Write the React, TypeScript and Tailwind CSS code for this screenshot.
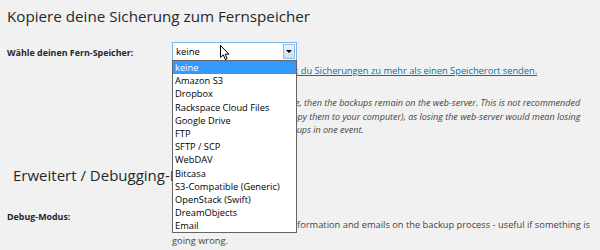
import React from 'react'

const STORAGE_OPTIONS = [
  'keine',
  'Amazon S3',
  'Dropbox',
  'Rackspace Cloud Files',
  'Google Drive',
  'FTP',
  'SFTP / SCP',
  'WebDAV',
  'Bitcasa',
  'S3-Compatible (Generic)',
  'OpenStack (Swift)',
  'DreamObjects',
  'Email',
]

function Cursor() {
  return (
    <svg
      className="absolute left-[47px] top-[2px] z-20"
      width="10"
      height="16"
      viewBox="0 0 10 16"
    >
      <path
        d="M0.5 0.5 L0.5 12.5 L3.3 9.8 L5.3 14.6 L7.1 13.8 L5.2 9.2 L9 9.2 Z"
        fill="#fff"
        stroke="#000"
        strokeWidth="1"
        strokeLinejoin="round"
      />
    </svg>
  )
}

function StorageSelect() {
  return (
    <div className="relative w-[125px] h-[19px] bg-white border border-[#7eb4ea] flex items-center">
      <span className="pl-[3px] text-[9.5px] text-black leading-none">keine</span>
      <div className="absolute right-[1px] top-[1px] w-[12px] h-[15px] border border-[#8fbbe6] bg-gradient-to-b from-[#eaf3fc] to-[#c9dff5] flex items-center justify-center">
        <span className="block w-0 h-0 border-l-[3px] border-r-[3px] border-t-[3px] border-l-transparent border-r-transparent border-t-black" />
      </div>
      <Cursor />
      <ul className="absolute left-[-1px] top-[17px] z-10 w-[125px] bg-white border border-[#646464]">
        {STORAGE_OPTIONS.map((opt, i) => (
          <li
            key={opt}
            className={
              i === 0
                ? 'h-[13.2px] leading-[13.2px] pl-[2px] text-[9.3px] bg-[#3399ff] text-white'
                : 'h-[13.2px] leading-[13.2px] pl-[2px] text-[9.3px] text-black'
            }
          >
            {opt}
          </li>
        ))}
      </ul>
    </div>
  )
}

export default function App() {
  return (
    <div className="w-[600px] h-[250px] overflow-hidden bg-[#f1f1f1] text-[#444] font-['Open_Sans',sans-serif]">
      <h2 className="pl-[7px] pt-[5px] text-[15.2px] leading-[22px] text-[#23282d] font-normal">
        Kopiere deine Sicherung zum Fernspeicher
      </h2>

      <div className="flex mt-[15px]">
        <div className="w-[172px] shrink-0 pl-[7px] pt-[4px] text-[8.9px] font-bold text-[#23282d]">
          Wähle deinen Fern-Speicher:
        </div>
        <div className="w-[420px]">
          <StorageSelect />
          <p className="mt-[3px] text-[9.3px] leading-[14px]">
            <a href="#" className="text-[#0073aa] underline">
              Mit Updraft Premium, kannst du Sicherungen zu mehr als einen Speicherort senden.
            </a>
          </p>
          <p className="mt-[18px] text-[9px] leading-[13.5px] italic text-[#444]">
            If you choose no remote storage, then the backups remain on the web-server. This is not
            recommended (unless you plan to manually copy them to your computer), as losing the
            web-server would mean losing both your website and the backups in one event.
          </p>
        </div>
      </div>

      <h2 className="pl-[13px] mt-[27px] text-[15px] leading-[22px] text-[#23282d] font-normal">
        Erweitert / Debugging-Einstellungen
      </h2>

      <div className="flex mt-[24px]">
        <div className="w-[172px] shrink-0 pl-[7px] text-[8.9px] font-bold text-[#23282d]">
          Debug-Modus:
        </div>
        <div className="w-[420px] pt-[7px] text-[9.3px] leading-[16px]">
          Check this to receive more information and emails on the backup process - useful if
          something is going wrong.
        </div>
      </div>
    </div>
  )
}
